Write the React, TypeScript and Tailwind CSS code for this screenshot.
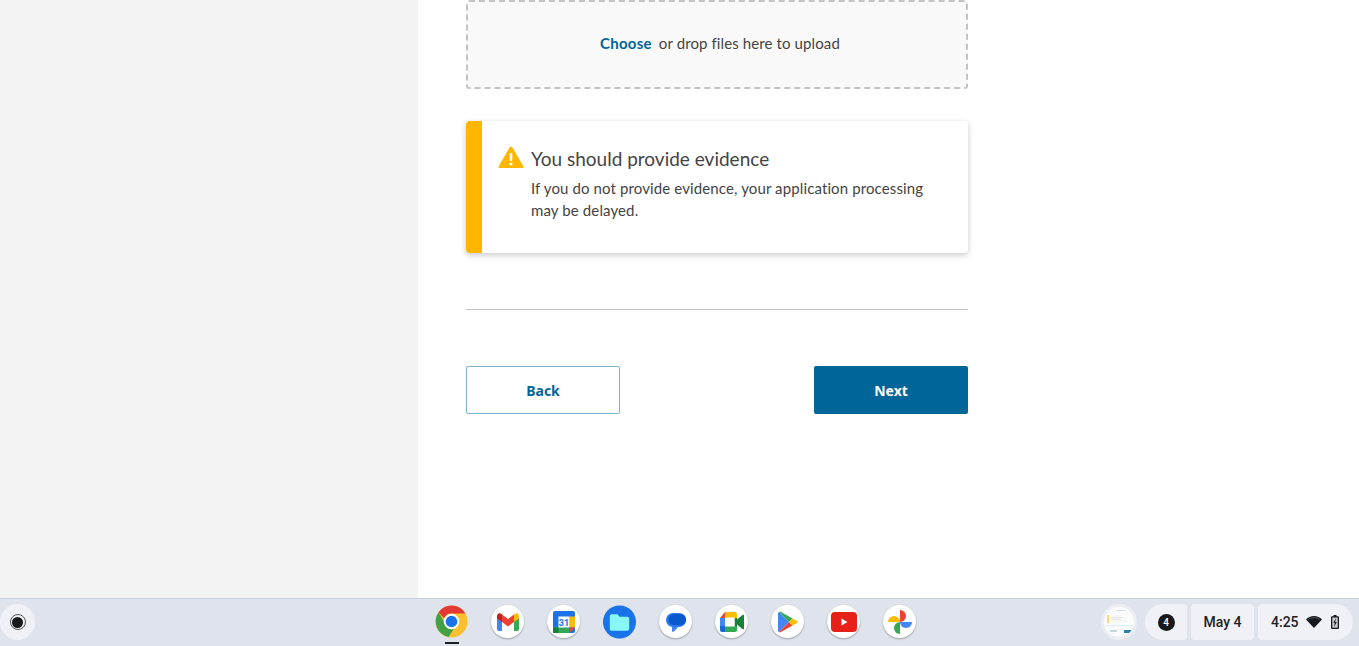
function Shelf({ children }: { children: React.ReactNode }) {
  return (
    <div className="w-[33px] h-[33px] rounded-full bg-white shadow-[0_1px_2px_rgba(0,0,0,0.3)] flex items-center justify-center">
      {children}
    </div>
  );
}

function ChromeIcon() {
  return (
    <svg width="33" height="33" viewBox="0 0 34 34">
      <circle cx="17" cy="17" r="16.500" fill="#fbc02d" />
      <path d="M17 .5A16.500 16.500 0 0 1 31.300 8.750H17a8.250 8.250 0 0 0-7.600 5L3.700 7.400A16.500 16.500 0 0 1 17 .5z" fill="#e53935" />
      <path d="M3.700 7.400l7.200 12.400a8.250 8.250 0 0 0 8.200 5.200l-5.200 8A16.500 16.500 0 0 1 3.700 7.400z" fill="#43a047" />
      <circle cx="17" cy="17" r="8" fill="#fff" />
      <circle cx="17" cy="17" r="6" fill="#1a73e8" />
    </svg>
  );
}

function GmailIcon() {
  return (
    <svg width="22" height="18" viewBox="0 0 22 18">
      <path d="M0 4v12a2 2 0 0 0 2 2h3V6z" fill="#4285f4" />
      <path d="M22 4v12a2 2 0 0 1-2 2h-3V6z" fill="#34a853" />
      <path d="M17 1.500V9l5-3.600V3c0-2.400-2.800-3.400-4.500-2z" fill="#fbbc04" />
      <path d="M5 9V1.500l6 4.600 6-4.600V9l-6 4.600z" fill="#ea4335" />
      <path d="M0 3v2.400L5 9V1.500L4.500 1C2.800-.4 0 .6 0 3z" fill="#c5221f" />
    </svg>
  );
}

function CalendarIcon() {
  return (
    <svg width="22" height="22" viewBox="0 0 22 22">
      <rect width="22" height="22" rx="2" fill="#1a73e8" />
      <rect x="16.500" y="5.500" width="5.500" height="11" fill="#fbbc04" />
      <rect x="0" y="16.500" width="16.500" height="5.500" fill="#34a853" />
      <rect x="0" y="16.500" width="5.500" height="5.500" rx="1" fill="#188038" />
      <path d="M16.500 16.500H22L16.500 22z" fill="#ea4335" />
      <rect x="5.500" y="5.500" width="11" height="11" fill="#fff" />
      <text x="11" y="14.500" textAnchor="middle" fontSize="9" fontWeight="700" fill="#1a73e8" fontFamily="Roboto, sans-serif">31</text>
    </svg>
  );
}

function FilesIcon() {
  return (
    <svg width="34" height="34" viewBox="0 0 34 34">
      <circle cx="17" cy="17" r="17" fill="#1a73e8" />
      <path d="M7 11a2 2 0 0 1 2-2h6l2 2.500h8a2 2 0 0 1 2 2V24a2 2 0 0 1-2 2H9a2 2 0 0 1-2-2z" fill="#8af7f7" />
    </svg>
  );
}

function MessagesIcon() {
  return (
    <svg width="22" height="22" viewBox="0 0 22 22">
      <path d="M7 15l6 1.500-4.500 4.200C7.800 21.300 7 20.800 7 19.800z" fill="#4285f4" />
      <rect x="1" y="2" width="20" height="14" rx="7" fill="#2a78f0" />
      <rect x="3.500" y="3" width="17.500" height="11" rx="5.500" fill="#0b57d0" />
    </svg>
  );
}

function MeetIcon() {
  return (
    <svg width="24" height="20" viewBox="0 0 24 20">
      <path d="M5 0h10a2 2 0 0 1 2 2v4.500H5z" fill="#fbbc04" />
      <path d="M5 0v6H0z" fill="#ea4335" />
      <rect x="0" y="6" width="5" height="8" fill="#4285f4" />
      <path d="M0 14h5v6H2a2 2 0 0 1-2-2z" fill="#1967d2" />
      <path d="M5 14h12v4a2 2 0 0 1-2 2H5z" fill="#34a853" />
      <path d="M17 7.500l5.500-4.500c.7-.5 1.500 0 1.500.8v12.400c0 .8-.8 1.300-1.500.8L17 12.500z" fill="#188038" />
      <rect x="14.500" y="6" width="2.500" height="8" fill="#188038" />
      <rect x="5" y="5.500" width="9.500" height="9" fill="#fff" />
    </svg>
  );
}

function PlayIcon() {
  return (
    <svg width="20" height="22" viewBox="0 0 20 22">
      <path d="M1 1l10 10L1 21c-.5-.3-1-.8-1-1.600V2.600C0 1.800.5 1.300 1 1z" fill="#4285f4" />
      <path d="M1 1c.6-.3 1.300-.3 2 .1L14.500 7.500 11 11z" fill="#34a853" />
      <path d="M1 21c.6.3 1.300.3 2-.1l11.500-6.400L11 11z" fill="#ea4335" />
      <path d="M14.500 7.500l4.300 2.400c1.300.7 1.300 1.500 0 2.200l-4.300 2.400L11 11z" fill="#fbbc04" />
    </svg>
  );
}

function YoutubeIcon() {
  return (
    <svg width="26" height="20" viewBox="0 0 26 20">
      <rect width="26" height="20" rx="4" fill="#e62117" />
      <path d="M10.500 6.500l6 3.500-6 3.500z" fill="#fff" />
    </svg>
  );
}

function PhotosIcon() {
  return (
    <svg width="24" height="24" viewBox="0 0 24 24">
      <path d="M12 12H0a6 6 0 0 1 6-6 6 6 0 0 1 6 6z" fill="#fbbc04" />
      <path d="M12 12V0a6 6 0 0 1 6 6 6 6 0 0 1-6 6z" fill="#ea4335" />
      <path d="M12 12h12a6 6 0 0 1-6 6 6 6 0 0 1-6-6z" fill="#4285f4" />
      <path d="M12 12v12a6 6 0 0 1-6-6 6 6 0 0 1 6-6z" fill="#34a853" />
    </svg>
  );
}

// tiny washed-out preview of the page itself
function Thumbnail() {
  return (
    <div className="relative w-9 h-9 rounded-full bg-[#fafbfc] border-[3px] border-[#eceef4] overflow-hidden">
      <div className="absolute left-[12px] top-[3px] w-[10px] h-px bg-[#d5dde5]" />
      <div className="absolute left-[3px] top-[8px] w-[2px] h-[8px] bg-[#fcd77a]" />
      <div className="absolute left-[5px] top-[8px] w-[18px] h-[8px] bg-[#f8f8f6]" />
      <div className="absolute left-[7px] top-[10px] w-[12px] h-px bg-[#e2e2e2]" />
      <div className="absolute left-[7px] top-[12px] w-[10px] h-px bg-[#e2e2e2]" />
      <div className="absolute left-[3px] top-[18px] w-[25px] h-px bg-[#e0edf5]" />
      <div className="absolute left-[6px] top-[23px] w-[7px] h-[2px] bg-[#c3d6e2]" />
      <div className="absolute left-[20px] top-[23px] w-[7px] h-[3px] bg-[#2f7fa8]" />
    </div>
  );
}

export default function App() {
  return (
    <div className="h-[646px] w-[1359px] overflow-hidden flex flex-col bg-white font-['Lato','Liberation_Sans',sans-serif]">
      <div className="h-[598px] flex">
        <div className="w-[418px] bg-[#f3f3f3]" />
        <div className="w-[502px] ml-[48px] flex flex-col">
          <div className="h-[89px] shrink-0 pb-[2px] pl-[6px] border-2 border-dashed border-[#c4c4c4] rounded-[3px] bg-[#f9f9f9] flex items-center justify-center text-[15px] tracking-[0.11px] text-[#444]">
            <span className="font-bold tracking-[0.25px] text-[#00669a]">Choose</span>
            <span className="ml-[7px]">or drop files here to upload</span>
          </div>

          <div className="mt-[32px] h-[132px] shrink-0 flex rounded-[4px] overflow-hidden bg-white shadow-[0_2px_6px_rgba(0,0,0,0.22)]">
            <div className="w-4 bg-[#ffb600]" />
            <div className="flex-1 pl-4 pt-[24px] flex items-start">
              <svg width="26" height="24" viewBox="0 0 26 24" className="shrink-0">
                <path d="M13 1.500c.5 0 1 .3 1.300.8l11 19c.5.8-.1 1.700-1 1.700H1.700c-.9 0-1.500-.9-1-1.700l11-19c.3-.5.8-.8 1.300-.8z" fill="#ffb600" />
                <rect x="11.700" y="8" width="2.600" height="8" rx="1" fill="#fff" />
                <circle cx="13" cy="19" r="1.600" fill="#fff" />
              </svg>
              <div className="ml-[7px] text-[#444]">
                <div className="text-[19px] leading-[27px]">You should provide evidence</div>
                <div className="text-[15px] tracking-[0.12px] leading-[22px] mt-[5px] w-[400px]">
                  If you do not provide evidence, your application processing may be delayed.
                </div>
              </div>
            </div>
          </div>

          <div className="mt-[56px] h-px bg-[#c4c4c4] shrink-0" />

          <div className="mt-[56px] flex justify-between font-['Noto_Sans',sans-serif] text-sm font-bold">
            <button className="w-[154px] h-[48px] pt-[2px] rounded-[2px] border border-[#7fb2cc] text-[#00669a] bg-white">Back</button>
            <button className="w-[154px] h-[48px] pt-[2px] rounded-[2px] bg-[#00669a] text-white">Next</button>
          </div>
        </div>
      </div>

      <div className="h-[48px] pb-[2px] border-t border-[#c9d0de] bg-[#dee3ec] relative flex items-center justify-center font-['Roboto',sans-serif]">
        <div className="absolute left-0 top-[5px] w-[35px] h-9 rounded-r-full bg-[#eff1f7] rounded-l-full flex items-center justify-center">
          <div className="w-4 h-4 rounded-full border border-[#555] flex items-center justify-center">
            <div className="w-[11px] h-[11px] rounded-full bg-[#17181c]" />
          </div>
        </div>

        <div className="flex items-center gap-[23px] ml-[-8px]">
          <div className="relative w-[33px] h-[33px] flex items-center justify-center">
            <ChromeIcon />
            <div className="absolute -bottom-[6px] left-[10px] w-[14px] h-[2px] bg-[#202124]" />
          </div>
          <Shelf><GmailIcon /></Shelf>
          <Shelf><CalendarIcon /></Shelf>
          <div className="w-[33px] h-[33px] flex items-center justify-center"><FilesIcon /></div>
          <Shelf><MessagesIcon /></Shelf>
          <Shelf><MeetIcon /></Shelf>
          <Shelf><PlayIcon /></Shelf>
          <Shelf><YoutubeIcon /></Shelf>
          <Shelf><PhotosIcon /></Shelf>
        </div>

        <div className="absolute right-[6px] top-[5px] flex items-center gap-[4px] text-[14px] font-medium text-[#202124]">
          <div className="mr-[4px]"><Thumbnail /></div>
          <div className="w-[42px] h-9 rounded-l-[18px] rounded-r-[4px] bg-[#eff1f7] flex items-center justify-center">
            <div className="w-[17px] h-[17px] rounded-full bg-[#17181c] text-white text-[10px] flex items-center justify-center">4</div>
          </div>
          <div className="w-[63px] h-9 rounded-[4px] bg-[#eff1f7] flex items-center justify-center">May 4</div>
          <div className="w-[95px] h-9 rounded-r-[18px] rounded-l-[4px] bg-[#eff1f7] flex items-center pl-[13px]">
            <span>4:25</span>
            <svg width="16" height="12" viewBox="0 0 16 12" className="ml-[7px]">
              <path d="M8 12L0 3.500C2 1.300 4.800 0 8 0s6 1.300 8 3.500z" fill="#17181c" />
              <path d="M2.200 3.600C3.800 2.300 5.800 1.600 8 1.600s4.200.7 5.800 2" fill="none" stroke="#6a6c72" strokeWidth="0.700" />
            </svg>
            <svg width="8" height="14" viewBox="0 0 8 14" className="ml-[9px]">
              <path d="M2.500 0h3v1.200H7a1 1 0 0 1 1 1V13a1 1 0 0 1-1 1H1a1 1 0 0 1-1-1V2.200a1 1 0 0 1 1-1h1.500z" fill="#17181c" />
              <rect x="1.300" y="2.500" width="5.400" height="10.200" fill="#c9ccd3" />
              <path d="M4.900 3L2.300 7.800h1.500L3.100 12l2.700-5H4.200z" fill="#17181c" />
            </svg>
          </div>
        </div>
      </div>
    </div>
  );
}
